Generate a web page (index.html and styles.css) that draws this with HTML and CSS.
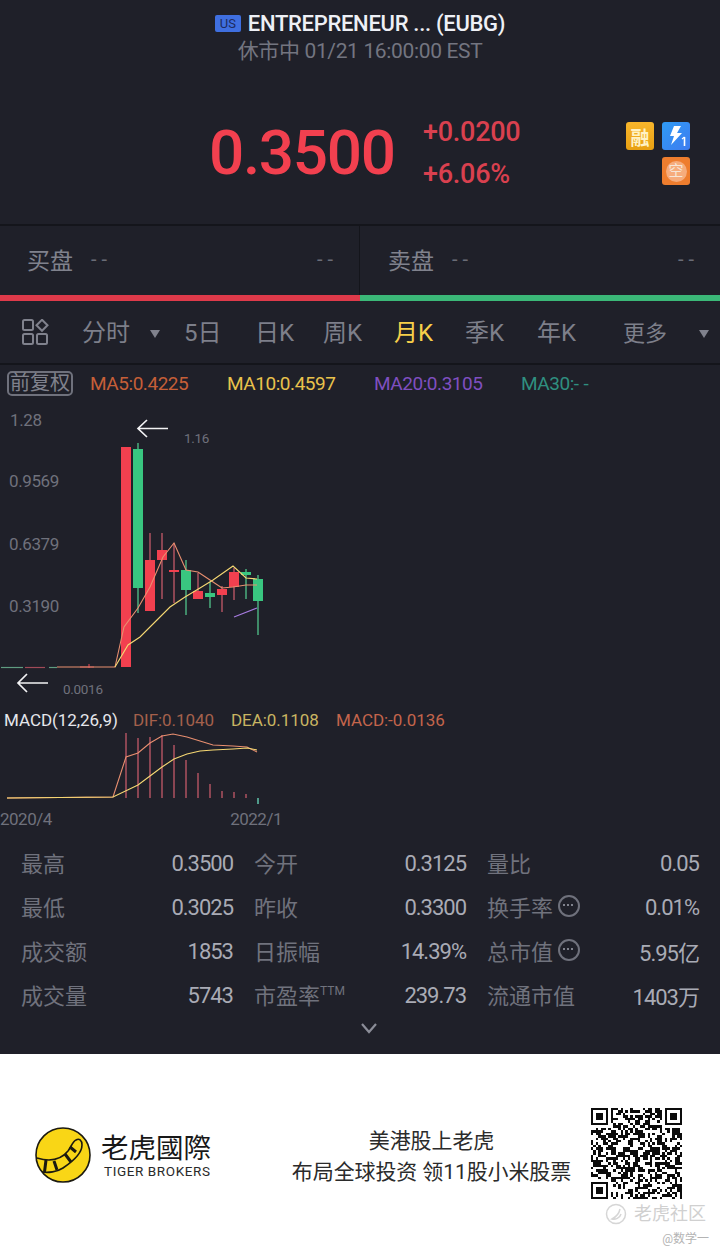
FILE: index.html
```html
<!DOCTYPE html>
<html lang="zh">
<head>
<meta charset="utf-8">
<title>EUBG</title>
<link rel="stylesheet" href="styles.css">
</head>
<body>
<div class="page">
  <header class="head">
    <div class="title"><span class="us">US</span><span>ENTREPRENEUR ... (EUBG)</span></div>
    <div class="sub">休市中 01/21 16:00:00 EST</div>
    <div class="quote">
      <div class="price">0.3500</div>
      <div class="change"><span>+0.0200</span><span>+6.06%</span></div>
      <div class="badges">
        <span class="badge gold">融</span>
        <span class="badge blue">
          <svg viewBox="0 0 28 28" width="28" height="28"><path d="M12 4h7l-4 7h5L9 23l3-9H8z" fill="#fff"/><path d="M22.500 15v9" stroke="#fff" stroke-width="1.600" fill="none"/><path d="M20 17l2.500-2" stroke="#fff" stroke-width="1.200" fill="none"/></svg>
        </span>
        <span class="badge orange slot2"><span class="ring">空</span></span>
      </div>
    </div>
  </header>

  <section class="book">
    <div class="side"><span class="side-name">买盘</span><span class="dash">--</span><span class="dash end">--</span></div>
    <div class="side right"><span class="side-name">卖盘</span><span class="dash">--</span><span class="dash end">--</span></div>
  </section>
  <div class="ratio"><i class="bid"></i><i class="ask"></i></div>

  <nav class="tabs">
    <svg class="grid-ico" viewBox="0 0 27 26" width="27" height="26"><g fill="none" stroke="#80828d" stroke-width="2"><rect x="1" y="1" width="10" height="10" rx="1.500"/><rect x="1" y="15" width="10" height="10" rx="1.500"/><rect x="15" y="15" width="10" height="10" rx="1.500"/><path d="M20 .8l5.500 5.500-5.500 5.500-5.500-5.500z"/></g></svg>
    <span class="tab t-fs">分时</span><span class="caret c1"></span>
    <span class="tab t-5">5日</span>
    <span class="tab t-d">日K</span>
    <span class="tab t-w">周K</span>
    <span class="tab t-m on">月K</span>
    <span class="tab t-q">季K</span>
    <span class="tab t-y">年K</span>
    <span class="tab t-more">更多</span><span class="caret c2"></span>
  </nav>

  <div class="ma">
    <span class="adj">前复权</span>
    <span class="ma5">MA5:0.4225</span>
    <span class="ma10">MA10:0.4597</span>
    <span class="ma20">MA20:0.3105</span>
    <span class="ma30">MA30:<span class="ma-dash">--</span></span>
  </div>

  <svg class="kline" viewBox="0 402 720 304" width="720" height="304">
    <g class="axis">
      <text x="10" y="426">1.28</text>
      <text x="9" y="487">0.9569</text>
      <text x="9" y="550">0.6379</text>
      <text x="9" y="612">0.3190</text>
    </g>
    <g class="axis-sm">
      <text x="184" y="443">1.16</text>
      <text x="63" y="694">0.0016</text>
    </g>
    <g fill="none" stroke="#f2f2f4" stroke-width="1.700">
      <path d="M168 428.500H138M147 420l-9 8.500 9 8.500"/>
      <path d="M48 683H18M27 674l-9 9 9 9"/>
    </g>
    <g class="wick-r">
      <path d="M150 533v27M162 533v66M174 543v60M198 573v26M222 586v26M234 568v32"/>
    </g>
    <g class="wick-g">
      <path d="M138 443v170M186 560v55M210 582v26M246 569v30M258 575v60"/>
    </g>
    <g fill="#f2404f">
      <rect x="121" y="447" width="10" height="220"/>
      <rect x="145" y="560" width="10" height="51"/>
      <rect x="157" y="550" width="10" height="10"/>
      <rect x="169" y="570" width="10" height="2"/>
      <rect x="193" y="591" width="10" height="8"/>
      <rect x="217" y="589" width="10" height="6"/>
      <rect x="229" y="572" width="10" height="15"/>
    </g>
    <g fill="#39c680">
      <rect x="133" y="449" width="10" height="139"/>
      <rect x="181" y="570" width="10" height="20"/>
      <rect x="205" y="593" width="10" height="4"/>
      <rect x="241" y="572" width="10" height="3"/>
      <rect x="253" y="579" width="10" height="22"/>
    </g>
    <g stroke-width="1.200">
      <path d="M1 667.500h22" stroke="#5f9c80"/>
      <path d="M25 667.500h20" stroke="#a04a58"/>
      <path d="M49 667.500h8" stroke="#5f9c80"/>
      <path d="M80 667h14M89 664v4" stroke="#c8404f"/>
    </g>
    <path class="ln" stroke="#e98f70" d="M57 667H115L124 627 138 608 150 587 163 557 174 543 186 570 198 572 210 580 222 588 233 587 246 585 257 585"/>
    <path class="ln" stroke="#f6d873" d="M115 667L128 645 140 637 157 620 170 607 185 597 200 588 213 580 233 566 246 578 257 579"/>
    <path class="ln" stroke="#a77be0" d="M234 617L257 608"/>
  </svg>

  <div class="macd-legend">
    <span class="m-name">MACD(12,26,9)</span>
    <span class="m-dif">DIF:0.1040</span>
    <span class="m-dea">DEA:0.1108</span>
    <span class="m-val">MACD:-0.0136</span>
  </div>
  <svg class="macd" viewBox="0 733 720 76" width="720" height="76">
    <path class="bars" d="M126 733v65M138 738v60M150 737v61M162 735v63M174 745v53M186 760v38M198 773v25M210 784v14M222 791v7M234 792v6M246 794v4"/>
    <path d="M258 798v6" stroke="#4f9a8a" stroke-width="2"/>
    <path class="ln" stroke="#e98f70" d="M7 798L113 797 126 757 138 753 150 743 162 736 173 734 187 737 200 741 213 745 233 746 247 747 257 752"/>
    <path class="ln" stroke="#f6d873" d="M7 798L113 797 138 785 150 776 162 767 174 759 187 754 200 751 213 750 233 749 247 748 257 750"/>
  </svg>
  <div class="dates"><span>2020/4</span><span>2022/1</span></div>

  <section class="stats">
    <div class="cell"><span class="k">最高</span><span class="v">0.3500</span></div>
    <div class="cell"><span class="k">今开</span><span class="v">0.3125</span></div>
    <div class="cell"><span class="k">量比</span><span class="v">0.05</span></div>
    <div class="cell"><span class="k">最低</span><span class="v">0.3025</span></div>
    <div class="cell"><span class="k">昨收</span><span class="v">0.3300</span></div>
    <div class="cell"><span class="k">换手率<i class="more"></i></span><span class="v">0.01%</span></div>
    <div class="cell"><span class="k">成交额</span><span class="v">1853</span></div>
    <div class="cell"><span class="k">日振幅</span><span class="v">14.39%</span></div>
    <div class="cell"><span class="k">总市值<i class="more"></i></span><span class="v">5.95亿</span></div>
    <div class="cell"><span class="k">成交量</span><span class="v">5743</span></div>
    <div class="cell"><span class="k">市盈率<sup>TTM</sup></span><span class="v">239.73</span></div>
    <div class="cell"><span class="k">流通市值</span><span class="v">1403万</span></div>
  </section>
  <div class="fold">
    <svg viewBox="0 0 18 12" width="18" height="12"><path d="M2 2l7 8 7-8" fill="none" stroke="#8b8d98" stroke-width="2.200"/></svg>
  </div>

  <footer class="foot">
    <div class="brand">
      <svg viewBox="0 0 60 60" width="60" height="60">
        <circle cx="30" cy="30" r="27" fill="#f9d616" stroke="#1c1a10" stroke-width="1.600"/>
        <path d="M4 33C14 36 26 37 35 26 38 22 40 16 43 15 46 13 49 15 49 20 49 28 42 35 30 43 24 47 15 48 9 47" fill="none" stroke="#1c1a10" stroke-width="1.600"/>
        <path d="M13 35l-1.500 12M21 36l3 9M32 29l6 8M37 22l6 5" stroke="#1c1a10" stroke-width="3" fill="none"/>
      </svg>
      <div class="brand-text">
        <div class="brand-cn">老虎國際</div>
        <div class="brand-en">TIGER BROKERS</div>
      </div>
    </div>
    <div class="slogan">
      <div>美港股上老虎</div>
      <div>布局全球投资 领11股小米股票</div>
    </div>
    <svg id="qr" class="qr" viewBox="0 0 37 37" width="91" height="91" shape-rendering="crispEdges"></svg>
    <div class="mark">
      <div class="mark-top">
        <svg viewBox="0 0 22 22" width="22" height="22"><circle cx="11" cy="11" r="9.500" fill="none" stroke="#d6d6d6" stroke-width="1.500"/><path d="M15 6c-1 5-4 8-8 10 3 1 8-1 9-5" fill="none" stroke="#d6d6d6" stroke-width="1.500"/></svg>
        <span>老虎社区</span>
      </div>
      <div class="mark-user">@数学一</div>
    </div>
  </footer>
</div>
<script src="qr.js"></script>
</body>
</html>
```
FILE: styles.css
```css
* { box-sizing: border-box; }
html, body { margin: 0; padding: 0; }
body { background: #fff; font-family: Roboto, "Noto Sans CJK SC", sans-serif; }
.page { width: 720px; height: 1255px; overflow: hidden; background: #1f2029; color: #80828d; }

.head { height: 224px; display: flex; flex-direction: column; align-items: center; padding-top: 9px; }
.title { height: 28px; display: flex; align-items: center; gap: 7px; color: #eef0f6; font-size: 22px; font-weight: 500; letter-spacing: -.3px; }
.us { width: 26px; height: 17px; border-radius: 2px; background: #3f6fe0; color: #1d2b5e; font-size: 13px; font-weight: 400; letter-spacing: 0; line-height: 17px; text-align: center; }
.sub { height: 28px; line-height: 28px; font-size: 21px; letter-spacing: -.35px; color: #737580; }
.quote { align-self: stretch; display: flex; align-items: center; margin-top: 57px; padding: 0 30px 0 209px; height: 63px; color: #f2404f; }
.price { width: 214px; font-size: 62px; font-weight: 500; line-height: 63px; letter-spacing: -1.300px; margin-top: -3px; }
.change { display: flex; flex-direction: column; font-size: 27px; font-weight: 500; letter-spacing: -.25px; line-height: 42px; color: #d9404f; margin-top: -1px; }
.badges { margin-left: auto; display: grid; grid-template-columns: 28px 28px; grid-auto-rows: 28px; gap: 7px 8px; }
.badge { border-radius: 3px; display: flex; align-items: center; justify-content: center; font-size: 19px; font-weight: 700; color: #fff2c4; }
.gold { background: linear-gradient(#f8b62c, #e8a012); }
.blue { background: linear-gradient(135deg, #2f9bf5, #3e7cf0); }
.orange { background: #ee7d2e; }
.slot2 { grid-column: 2; }
.ring { width: 21px; height: 21px; border-radius: 50%; background: #f6ac7c; color: #f6e6d6; font-size: 15px; font-weight: 400; line-height: 21px; text-align: center; }

.book { height: 71px; display: flex; border-top: 2px solid #14151b; }
.side { width: 360px; display: flex; align-items: center; padding: 0 21px 4px 27px; border-right: 1px solid #14151b; }
.side.right { border-right: 0; padding-left: 28px; padding-right: 21px; }
.side-name { font-size: 23px; color: #80828d; width: 64px; }
.dash { font-size: 20px; letter-spacing: 5px; color: #6a6c77; }
.end { margin-left: auto; }
.ratio { height: 6px; display: flex; }
.ratio i { flex: 1; }
.bid { background: #de3a4a; }
.ask { background: #3bb878; }

.tabs { height: 64px; display: flex; align-items: center; border-bottom: 2px solid #14151b; padding-left: 22px; }
.tab { font-size: 24px; color: #7d7f8a; white-space: nowrap; margin-top: -3px; }
.grid-ico { margin-right: 33px; }
.caret { width: 0; height: 0; border-left: 5px solid transparent; border-right: 5px solid transparent; border-top: 8px solid #80828d; margin-top: 3px; }
.c1 { margin-left: 20px; margin-right: 24px; }
.t-5 { width: 71px; }
.t-d { width: 68px; }
.t-w { width: 71px; }
.t-m { width: 71px; }
.t-q { width: 72px; }
.t-y { width: 86px; }
.t-more { font-size: 22px; width: 76px; }
.on { color: #f7cf4a; }

.ma { height: 37px; display: flex; align-items: center; padding-left: 7px; font-size: 19px; letter-spacing: -.45px; }
.adj { width: 66px; height: 25px; line-height: 21px; margin-right: 17px; border: 2px solid #6f717c; border-radius: 5px; font-size: 20px; letter-spacing: 0; text-align: center; color: #80828d; }
.ma5 { width: 137px; color: #c65f38; }
.ma10 { width: 147px; color: #e9c24c; }
.ma20 { width: 147px; color: #7f4fc0; }
.ma30 { color: #2f8f80; }
.ma-dash { letter-spacing: 4.500px; }

.kline, .macd { display: block; }
.axis text { font-size: 17px; letter-spacing: -.4px; fill: #6f717c; }
.axis-sm text { font-size: 13.500px; letter-spacing: -.3px; fill: #6f717c; }
.wick-r path { fill: none; stroke: #8a4552; stroke-width: 2; }
.wick-g path { fill: none; stroke: #3f8a68; stroke-width: 2; }
.ln { fill: none; stroke-width: 1.100; }
.bars { fill: none; stroke: #8a4552; stroke-width: 2; }

.macd-legend { height: 27px; display: flex; align-items: center; padding-left: 4px; font-size: 17px; letter-spacing: -.05px; }
.m-name { width: 129px; color: #e6e7ec; }
.m-dif { width: 98px; color: #a4604c; }
.m-dea { width: 105px; color: #c9b562; }
.m-val { color: #c4654c; }

.dates { width: 282px; height: 20px; display: flex; justify-content: space-between; align-items: center; font-size: 17px; letter-spacing: -.5px; color: #6f717c; }

.stats { margin-top: 12px; padding: 0 21px; display: grid; grid-template-columns: repeat(3, 212px); column-gap: 21px; grid-auto-rows: 44px; }
.cell { display: flex; justify-content: space-between; align-items: center; }
.k { display: flex; align-items: center; font-size: 22px; color: #70727d; margin-top: -2px; }
.k sup { font-size: 12px; align-self: flex-start; line-height: 14px; margin-top: 6px; }
.v { font-size: 22px; letter-spacing: -1px; color: #a9abb5; }
.more { position: relative; width: 22px; height: 22px; margin-left: 5px; border: 2px solid #6f717c; border-radius: 50%; }
.more::after { content: ""; position: absolute; left: 3px; top: 7px; width: 2px; height: 2px; background: #80828d; box-shadow: 4px 0 #80828d, 8px 0 #80828d; }
.fold { height: 37px; display: flex; justify-content: center; padding: 5px 0 0 17px; }

.foot { position: relative; height: 201px; background: #fff; display: flex; padding: 54px 38px 0 33px; color: #111; }
.brand { width: 240px; height: 60px; display: flex; align-items: center; gap: 8px; margin-top: 17px; }
.brand-cn { font-size: 27.500px; line-height: 34px; margin-bottom: -3px; color: #181818; }
.brand-en { font-size: 13.500px; line-height: 16px; color: #2a2a2a; margin-left: 3px; letter-spacing: .6px; }
.slogan { width: 319px; margin-left: -1px; padding-top: 18px; text-align: center; font-size: 21px; letter-spacing: -.1px; line-height: 31px; color: #2b2b2b; }
.qr { flex: none; }
.mark { position: absolute; right: 11px; top: 148px; width: 104px; text-align: right; color: #d0d0d0; }
.mark-top { display: flex; align-items: center; gap: 7px; font-size: 18px; line-height: 24px; }
.mark-user { font-size: 12px; line-height: 16px; margin-top: 5px; color: #b4b4b4; }
```
FILE: qr.js
```js
// Draws a QR-like module pattern: three finder squares and pseudo-random data.
(function () {
  var N = 37, svg = document.getElementById("qr"), d = "", seed = 1103;
  function rnd() { seed = (seed * 1664525 + 1013904223) >>> 0; return (seed >>> 16) & 1; }
  function inFinder(x, y) {
    return (x < 8 && y < 8) || (x > N - 9 && y < 8) || (x < 8 && y > N - 9);
  }
  for (var y = 0; y < N; y++) {
    for (var x = 0; x < N; x++) {
      if (!inFinder(x, y) && rnd()) d += "M" + x + " " + y + "h1v1h-1z";
    }
  }
  function finder(x, y) {
    return "M" + x + " " + y + "h7v7h-7zM" + (x + 1) + " " + (y + 1) + "v5h5v-5zM" + (x + 2) + " " + (y + 2) + "h3v3h-3z";
  }
  d += finder(0, 0) + finder(N - 7, 0) + finder(0, N - 7);
  var p = document.createElementNS("http://www.w3.org/2000/svg", "path");
  p.setAttribute("d", d);
  p.setAttribute("fill", "#0c0c0c");
  p.setAttribute("fill-rule", "evenodd");
  svg.appendChild(p);
})();
```
